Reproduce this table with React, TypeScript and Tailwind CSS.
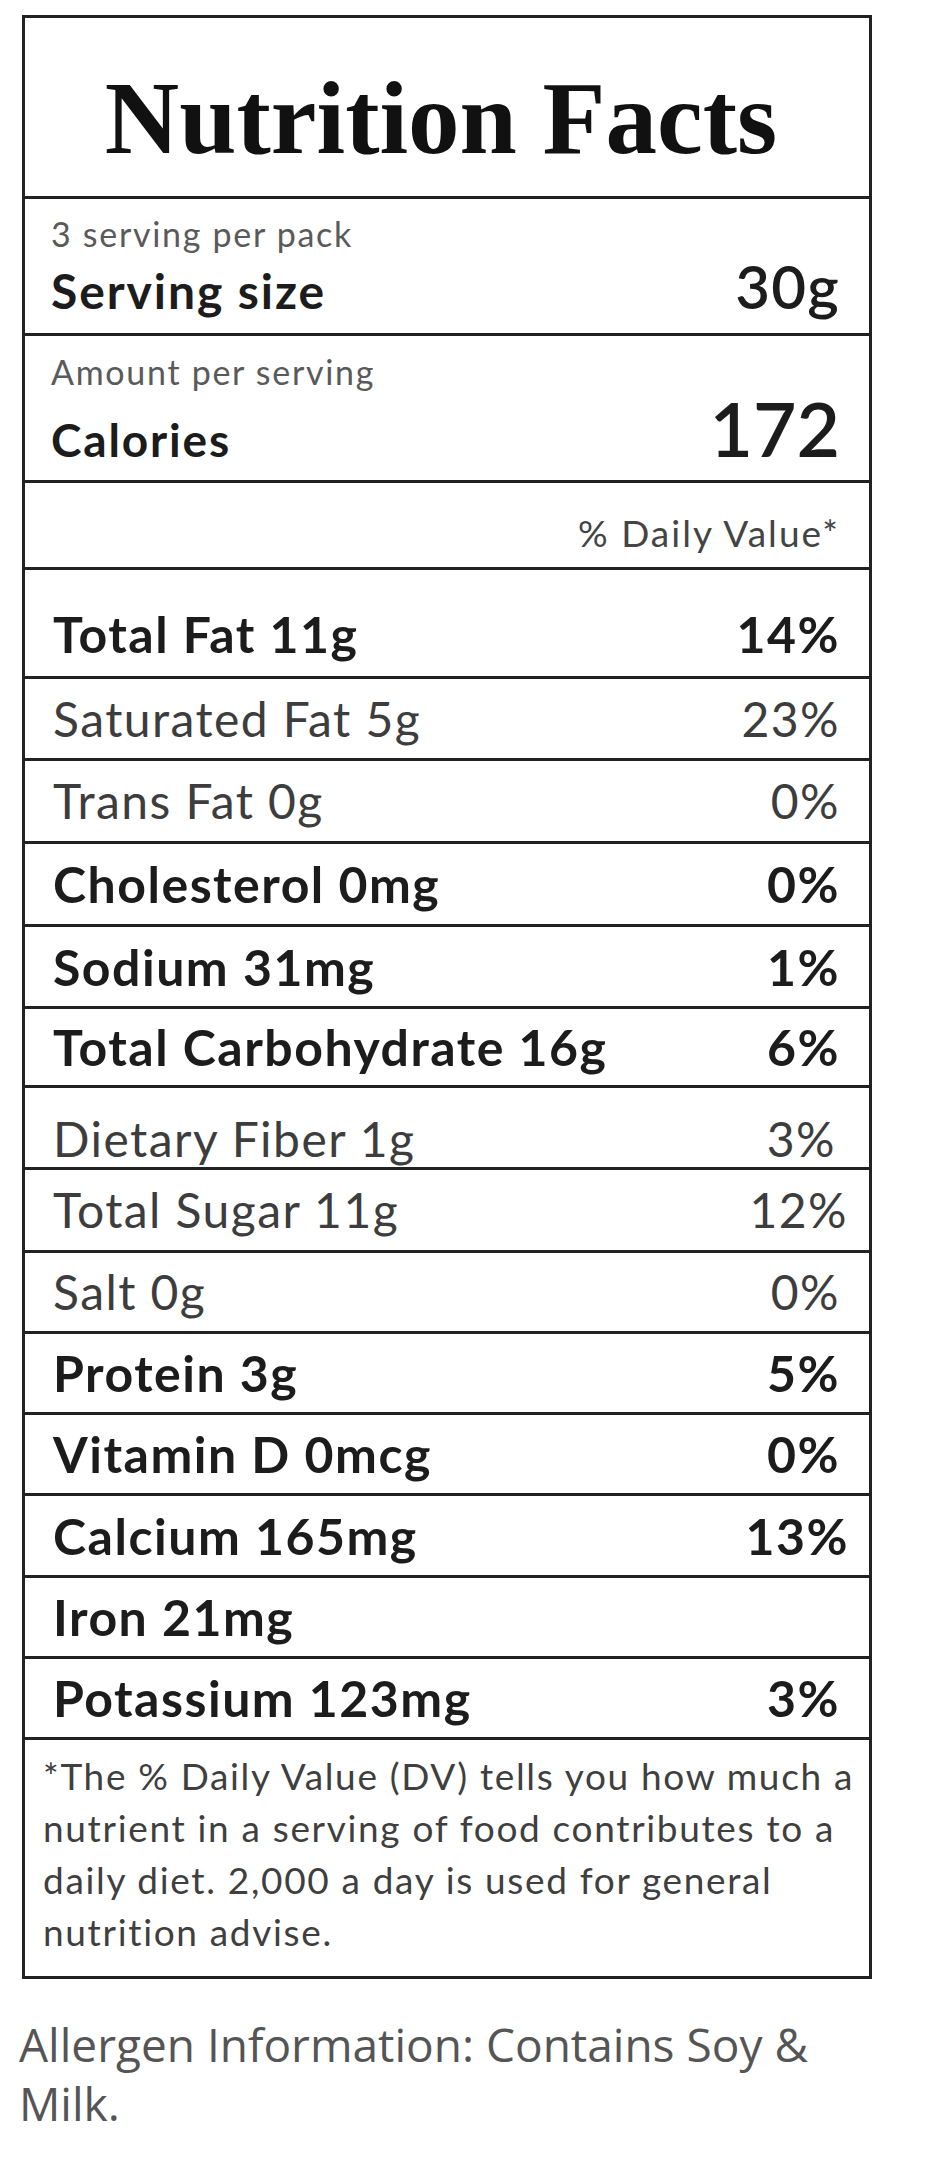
type Row = {
  label: string;
  value?: string;
  bold?: boolean;
  rowCls: string;
  valueCls?: string;
};

const rows: Row[] = [
  { label: "Total Fat 11g", value: "14%", bold: true, rowCls: "h-[109px] pt-[21px]" },
  { label: "Saturated Fat 5g", value: "23%", rowCls: "h-[82px]" },
  { label: "Trans Fat 0g", value: "0%", rowCls: "h-[83px]" },
  { label: "Cholesterol 0mg", value: "0%", bold: true, rowCls: "h-[83px]" },
  { label: "Sodium 31mg", value: "1%", bold: true, rowCls: "h-[82px]" },
  { label: "Total Carbohydrate 16g", value: "6%", bold: true, rowCls: "h-[79px]" },
  { label: "Dietary Fiber 1g", value: "3%", rowCls: "h-[82px] pt-[22px]", valueCls: "mr-[4px]" },
  { label: "Total Sugar 11g", value: "12%", rowCls: "h-[83px]", valueCls: "-mr-[8px]" },
  { label: "Salt 0g", value: "0%", rowCls: "h-[81px]" },
  { label: "Protein 3g", value: "5%", bold: true, rowCls: "h-[81px]" },
  { label: "Vitamin D 0mcg", value: "0%", bold: true, rowCls: "h-[81px]" },
  { label: "Calcium 165mg", value: "13%", bold: true, rowCls: "h-[82px]", valueCls: "-mr-[9px]" },
  { label: "Iron 21mg", bold: true, rowCls: "h-[81px]" },
  { label: "Potassium 123mg", value: "3%", bold: true, rowCls: "h-[81px]" },
];

function NutrientRow({ row }: { row: Row }) {
  const tone = row.bold
    ? "text-[50px] font-bold text-[#1c1c1c] tracking-[0.03em]"
    : "text-[48px] font-normal text-[#3d3d3d] tracking-[0.03em]";
  return (
    <div
      className={`flex items-center justify-between border-b-[3px] border-[#222] pl-[28px] pr-[29px] leading-none ${row.rowCls} ${tone}`}
    >
      <span>{row.label}</span>
      {row.value && <span className={row.valueCls}>{row.value}</span>}
    </div>
  );
}

export default function App() {
  return (
    <div className="min-h-[2172px] w-[940px] bg-white pt-[15px] font-['Lato',sans-serif]">
      <div className="ml-[22px] w-[850px] border-[3px] border-[#222] bg-white">
        {/* title */}
        <div className="flex h-[181px] justify-center border-b-[3px] border-[#222] pt-[49px] pr-[12px]">
          <h1 className="font-['Liberation_Serif',serif] text-[103px] font-bold leading-none text-[#111]">
            Nutrition Facts
          </h1>
        </div>

        {/* serving */}
        <div className="h-[137px] border-b-[3px] border-[#222] pl-[26px] pr-[29px] pt-[18px]">
          <p className="text-[34px] leading-none tracking-[0.05em] text-[#5a5a5a]">3 serving per pack</p>
          <div className="mt-[5px] flex items-baseline justify-between leading-none">
            <span className="text-[48px] font-bold tracking-[0.04em] text-[#1c1c1c]">Serving size</span>
            <span className="text-[60px] font-semibold tracking-[0.02em] text-[#1c1c1c]">30g</span>
          </div>
        </div>

        {/* calories */}
        <div className="h-[147px] border-b-[3px] border-[#222] pl-[26px] pr-[29px] pt-[19px]">
          <p className="text-[34px] leading-none tracking-[0.05em] text-[#5a5a5a]">Amount per serving</p>
          <div className="mt-[2px] flex items-baseline justify-between leading-none">
            <span className="text-[46px] font-bold tracking-[0.04em] text-[#1c1c1c]">Calories</span>
            <span className="text-[75px] font-semibold text-[#1c1c1c]">172</span>
          </div>
        </div>

        {/* daily value header */}
        <div className="flex h-[87px] justify-end border-b-[3px] border-[#222] pr-[29px] pt-[31px]">
          <span className="text-[37px] leading-none tracking-[0.055em] text-[#444]">% Daily Value*</span>
        </div>

        {rows.map((row) => (
          <NutrientRow key={row.label} row={row} />
        ))}

        {/* footnote */}
        <div className="h-[236px] pl-[18px] pt-[10px] text-[37px] leading-[52px] tracking-[0.045em] text-[#3f3f3f]">
          <span className="block whitespace-nowrap">*The % Daily Value (DV) tells you how much a</span>
          <span className="block whitespace-nowrap">nutrient in a serving of food contributes to a</span>
          <span className="block whitespace-nowrap">daily diet. 2,000 a day is used for general</span>
          <span className="block whitespace-nowrap">nutrition advise.</span>
        </div>
      </div>

      <p className="mt-[36px] pl-[19px] font-['Open_Sans',sans-serif] text-[46px] font-normal leading-[59px] text-[#555]">
        Allergen Information: Contains Soy &amp;
        <br />
        Milk.
      </p>
    </div>
  );
}
